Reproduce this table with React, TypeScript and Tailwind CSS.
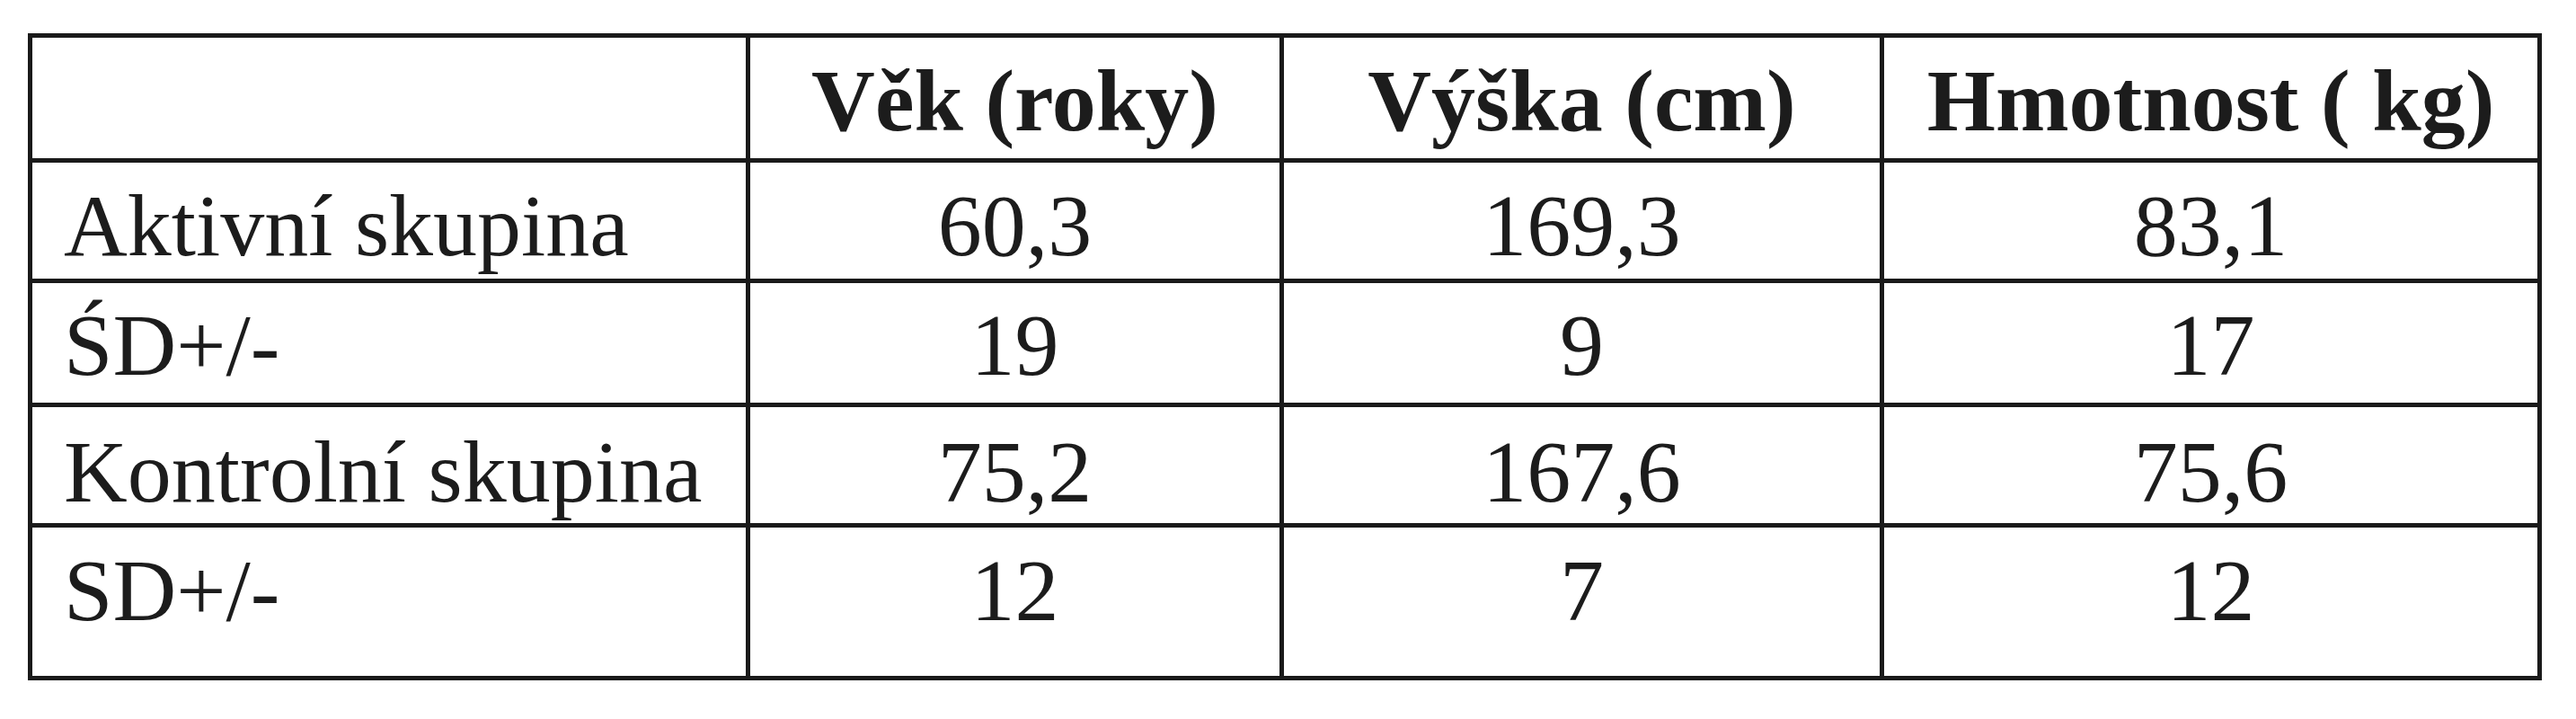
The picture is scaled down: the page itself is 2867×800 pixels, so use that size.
const HEADERS = ["Věk (roky)", "Výška (cm)", "Hmotnost ( kg)"];

const ROWS = [
  { label: "Aktivní skupina", values: ["60,3", "169,3", "83,1"], h: "h-[129px]", pad: "pt-[10px]" },
  { label: "ŚD+/-", values: ["19", "9", "17"], h: "h-[133px]", pad: "pt-[4px]" },
  { label: "Kontrolní skupina", values: ["75,2", "167,6", "75,6"], h: "h-[129px]", pad: "pt-[14px]" },
  { label: "SD+/-", values: ["12", "7", "12"], h: "h-[165px]", pad: "pb-[26px]" },
];

export default function App() {
  return (
    <div className="min-h-screen bg-white pl-[31px] pt-[37px] font-['Liberation_Serif',serif] text-[98px] leading-none text-[#1c1c1c]">
      <div className="grid w-max grid-cols-[794px_589px_663px_727px] gap-[5px] bg-[#1a1a1a] p-[5px]">
        {/* header */}
        <div className="h-[134px] bg-white" />
        {HEADERS.map((h) => (
          <div
            key={h}
            className="flex h-[134px] items-center justify-center bg-white pt-[5px] font-bold"
          >
            {h}
          </div>
        ))}

        {ROWS.map((r) => (
          <Row key={r.label} {...r} />
        ))}
      </div>
    </div>
  );
}

function Row({
  label,
  values,
  h,
  pad,
}: {
  label: string;
  values: string[];
  h: string;
  pad: string;
}) {
  return (
    <>
      <div className={`flex items-center bg-white pl-[35px] ${h} ${pad}`}>
        {label}
      </div>
      {values.map((v, i) => (
        <div
          key={i}
          className={`flex items-center justify-center bg-white ${h} ${pad}`}
        >
          {v}
        </div>
      ))}
    </>
  );
}
